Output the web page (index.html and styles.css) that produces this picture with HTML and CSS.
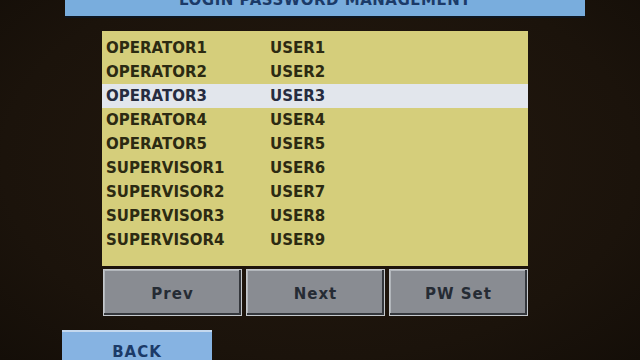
FILE: index.html
```html
<!DOCTYPE html>
<html>
<head>
<meta charset="utf-8">
<link rel="stylesheet" href="styles.css">
</head>
<body>
<div class="screen">
  <div class="banner"><div class="banner-text">LOGIN PASSWORD MANAGEMENT</div></div>
  <div class="list">
    <div class="row"><span class="name">OPERATOR1</span><span class="user">USER1</span></div>
    <div class="row"><span class="name">OPERATOR2</span><span class="user">USER2</span></div>
    <div class="row selected"><span class="name">OPERATOR3</span><span class="user">USER3</span></div>
    <div class="row"><span class="name">OPERATOR4</span><span class="user">USER4</span></div>
    <div class="row"><span class="name">OPERATOR5</span><span class="user">USER5</span></div>
    <div class="row"><span class="name">SUPERVISOR1</span><span class="user">USER6</span></div>
    <div class="row"><span class="name">SUPERVISOR2</span><span class="user">USER7</span></div>
    <div class="row"><span class="name">SUPERVISOR3</span><span class="user">USER8</span></div>
    <div class="row"><span class="name">SUPERVISOR4</span><span class="user">USER9</span></div>
  </div>
  <div class="buttons">
    <div class="btn">Prev</div>
    <div class="btn">Next</div>
    <div class="btn">PW Set</div>
  </div>
  <div class="back">BACK</div>
</div>
</body>
</html>
```
FILE: styles.css
```css
html, body {
  margin: 0;
  padding: 0;
  width: 640px;
  height: 360px;
  overflow: hidden;
  background: #1d140c;
  font-family: "DejaVu Sans", "Liberation Sans", sans-serif;
  font-weight: bold;
}
.screen {
  display: flex;
  flex-direction: column;
  width: 640px;
  height: 360px;
  background: radial-gradient(ellipse at 50% 45%, #24190f 0%, #1b130b 70%, #140e08 100%);
}
.banner {
  margin-left: 65px;
  width: 520px;
  height: 16px;
  background: #79addd;
  border-bottom: 2px solid #0e1620;
  overflow: hidden;
  text-align: center;
}
.banner-text {
  margin-top: -8px;
  line-height: 17px;
  font-size: 15px;
  letter-spacing: 0.5px;
  color: #1b3a68;
}
.list {
  margin-top: 13px;
  margin-left: 102px;
  width: 426px;
  height: 232px;
  padding-top: 5px;
  background: #d5ce7b;
}
.row {
  display: flex;
  height: 24px;
  line-height: 24px;
  font-size: 15px;
  color: #2c2a12;
}
.row.selected {
  background: #e2e6ec;
  color: #262c40;
}
.name {
  width: 164px;
  padding-left: 4px;
}
.buttons {
  display: flex;
  gap: 4px;
  margin-top: 3px;
  margin-left: 103px;
}
.btn {
  width: 137px;
  height: 43px;
  box-sizing: content-box;
  background: #898c92;
  border: 1px solid #c4c8cc;
  box-shadow: inset -2px -2px 0 #34373c, inset 1px 1px 0 #b2b6bb;
  color: #252b34;
  font-size: 15px;
  letter-spacing: 1px;
  display: flex;
  align-items: center;
  justify-content: center;
  padding-top: 2px;
}
.back {
  margin-top: 14px;
  margin-left: 62px;
  width: 150px;
  height: 30px;
  box-sizing: border-box;
  background: #86b3e2;
  border-top: 2px solid #c4d8ee;
  color: #1b3a68;
  font-size: 15px;
  letter-spacing: 1px;
  text-align: center;
  line-height: 40px;
}
```
